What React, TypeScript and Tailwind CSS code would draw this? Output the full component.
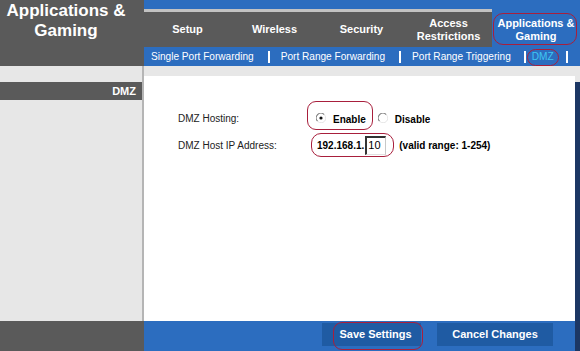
import React from "react";

function Radio({ checked }: { checked?: boolean }) {
  return (
    <svg width="10" height="10" viewBox="0 0 10 10" className="shrink-0">
      <circle cx="5" cy="5" r="4.4" fill="#ffffff" />
      <path d="M1.6 8.2 A4.4 4.4 0 0 1 8.2 1.6" fill="none" stroke="#7a7a7a" strokeWidth="1.1" />
      <path d="M8.4 1.8 A4.4 4.4 0 0 1 1.8 8.4" fill="none" stroke="#e4e4e4" strokeWidth="1" />
      {checked && <circle cx="5" cy="5" r="1.6" fill="#111111" />}
    </svg>
  );
}

function Sep() {
  return <div className="w-[2px] h-[12px] bg-white ml-[14px] mr-[11px]" />;
}

export default function App() {
  const tabs = ["Setup", "Wireless", "Security", "Access Restrictions"];
  return (
    <div className="w-[580px] h-[351px] flex flex-col overflow-hidden bg-[#e7e7e7] font-['Liberation_Sans',Arial,sans-serif]">
      {/* Header */}
      <div className="flex h-[66px] bg-[#5a5a5a]">
        <div className="w-[144px] pt-[1px]">
          <div className="w-[132px] text-center text-white font-bold text-[17px] leading-[20px]">
            Applications &amp;
            <br />
            Gaming
          </div>
        </div>
        <div className="flex-1 flex flex-col">
          <div className="flex h-[47px]">
            <div className="flex-1 flex flex-col">
              <div className="h-[9px] bg-[#2c6dbf]" />
              <div className="h-[3px] bg-[#c2c2c2]" />
              <div className="flex-1 flex">
                {tabs.map((t) => (
                  <div
                    key={t}
                    className="w-[87px] flex items-center justify-center text-center text-white font-bold text-[11px] leading-[13px] px-[6px]"
                  >
                    {t}
                  </div>
                ))}
              </div>
            </div>
            <div className="relative w-[88px] bg-[#2c6dbf] flex items-center justify-center pt-[12px] text-center text-white font-bold text-[11px] leading-[13px]">
              Applications &amp;
              <br />
              Gaming
              <span className="absolute left-[1px] top-[13px] w-[84px] h-[32px] rounded-[10px] border border-[#a81f3c]" />
            </div>
          </div>
          <div className="h-[19px] bg-[#2c6dbf] flex items-center pl-[7px] text-[10.1px] text-white whitespace-nowrap">
            <span>Single Port Forwarding</span>
            <Sep />
            <span>Port Range Forwarding</span>
            <Sep />
            <span>Port Range Triggering</span>
            <div className="w-[2px] h-[12px] bg-white ml-[13px] mr-[6px]" />
            <span className="relative text-[#3fc6f2] leading-[12px]">
              DMZ
              <span className="absolute left-[-5px] top-[-2px] w-[32px] h-[17px] rounded-full border border-[#a81f3c]" />
            </span>
            <div className="w-[2px] h-[12px] bg-white ml-[12px]" />
          </div>
        </div>
      </div>

      {/* Body */}
      <div className="flex h-[255px]">
        <div className="w-[144px] flex flex-col bg-[#e7e7e7] border-r-2 border-[#b5b5b5]">
          <div className="h-[16px]" />
          <div className="h-[18px] bg-[#5a5a5a] text-white font-bold text-[11px] flex items-center justify-end pr-[6px]">
            DMZ
          </div>
        </div>
        <div className="flex-1 flex bg-[#e7e7e7]">
          <div className="flex-1 mt-[10px] bg-white pl-[34px] pt-[28px] text-[10px] text-[#222]">
            <div className="flex items-center h-[28px]">
              <div className="w-[138px]">DMZ Hosting:</div>
              <div className="relative flex items-center font-bold text-black">
                <span className="absolute left-[-9px] top-[-9px] w-[66px] h-[29px] rounded-[9px] border border-[#a81f3c]" />
                <Radio checked />
                <span className="ml-[7px] mt-[2px]">Enable</span>
                <span className="ml-[12px]">
                  <Radio />
                </span>
                <span className="ml-[7px] mt-[2px]">Disable</span>
              </div>
            </div>
            <div className="flex items-center h-[26px]">
              <div className="w-[138px]">DMZ Host IP Address:</div>
              <div className="relative flex items-center font-bold text-black">
                <span className="absolute left-[-5px] top-[-3px] w-[83px] h-[24px] rounded-[10px] border border-[#a81f3c]" />
                <span className="ml-[1px]">192.168.1.</span>
                <div className="ml-[1px] w-[21px] h-[19px] border-t-2 border-l-2 border-[#333] border-r border-r-[#c8c8c8] border-b border-b-[#e0e0e0] bg-white font-normal text-[11px] leading-[15px] pl-[1px]">
                  10
                </div>
                <span className="ml-[13px]">(valid range: 1-254)</span>
              </div>
            </div>
          </div>
          <div className="w-[5px] mt-[16px] bg-[#1c3764]" />
        </div>
      </div>

      {/* Footer */}
      <div className="flex h-[30px]">
        <div className="w-[144px] bg-[#5a5a5a]" />
        <div className="flex-1 flex bg-[#2c6dbf]">
          <div className="flex-1 flex justify-end items-start pt-[2px] pr-[22px] gap-[16px]">
            <div className="relative w-[99px] h-[23px] bg-[#1f5ba3] flex items-center justify-center text-white font-bold text-[11px] pl-[8px]">
              Save Settings
              <span className="absolute left-[11px] top-[-1px] w-[90px] h-[28px] rounded-[9px] border border-[#a81f3c]" />
            </div>
            <div className="w-[116px] h-[23px] bg-[#1f5ba3] flex items-center justify-center text-white font-bold text-[11px]">
              Cancel Changes
            </div>
          </div>
          <div className="w-[5px] bg-[#1c3764]" />
        </div>
      </div>
    </div>
  );
}
